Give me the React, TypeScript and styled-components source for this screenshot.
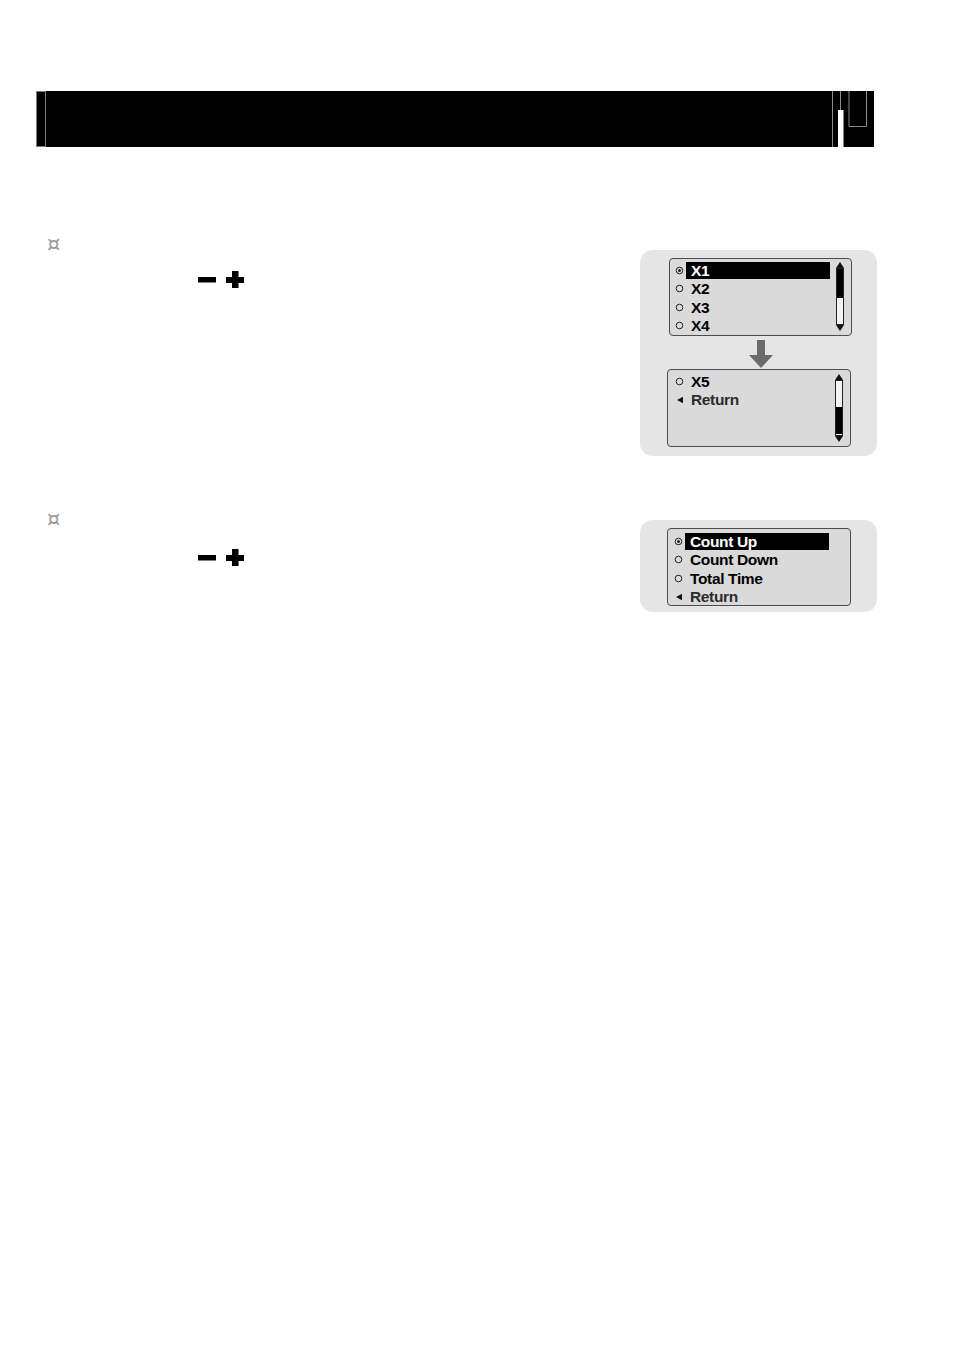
import { FC } from 'react';
import styled, { createGlobalStyle } from 'styled-components';

const GlobalStyle = createGlobalStyle`
  body {
    margin: 0;
    background: #ffffff;
    font-family: 'Liberation Sans', Arial, sans-serif;
  }
`;

const Page = styled.div`
  width: 954px;
  height: 1350px;
  padding-top: 91px;
  box-sizing: border-box;
  background: #ffffff;
`;

const Header = styled.div`
  display: flex;
  margin-left: 36px;
  width: 838px;
  height: 56px;
  background: #000;
`;

const HeaderCap = styled.div`
  width: 10px;
  box-sizing: border-box;
  border: 1px solid #7a7a7a;
`;

const HeaderFill = styled.div`
  flex: 1;
`;

const Section = styled.section<{ top: number }>`
  display: flex;
  align-items: flex-start;
  margin-top: ${(p) => p.top}px;
`;

const Intro = styled.div`
  flex: 1;
  padding-left: 47px;
`;

const Bullet = styled.div`
  font-family: 'DejaVu Sans', sans-serif;
  font-size: 21px;
  line-height: 12px;
  height: 12px;
  color: #9a9a9a;
`;

const Keys = styled.div<{ top: number }>`
  display: flex;
  align-items: center;
  gap: 10px;
  margin-top: ${(p) => p.top}px;
  margin-left: 151px;
`;

const Panel = styled.div<{ top: number; pad: string }>`
  width: 237px;
  margin-top: ${(p) => p.top}px;
  margin-right: 77px;
  padding: ${(p) => p.pad};
  box-sizing: border-box;
  background: #e5e5e5;
  border-radius: 13px;
`;

const Screen = styled.div<{ w: number; h: number; shift?: number }>`
  display: flex;
  width: ${(p) => p.w}px;
  height: ${(p) => p.h}px;
  margin-left: ${(p) => p.shift || 0}px;
  box-sizing: border-box;
  border: 1px solid #4d4d4d;
  border-radius: 4px;
  background: #dadada;
`;

const List = styled.ul<{ pad: string }>`
  flex: 1;
  list-style: none;
  margin: 0;
  padding: ${(p) => p.pad};
`;

const Row = styled.li`
  display: flex;
  align-items: center;
  height: 18.5px;
`;

const Marker = styled.span`
  display: flex;
  align-items: center;
  justify-content: center;
  width: 9px;
  height: 18px;
  margin-right: 2px;
`;

const Label = styled.span<{ active?: boolean; dim?: boolean }>`
  flex: 1;
  height: 17px;
  padding-left: 5px;
  font-size: 15.5px;
  font-weight: 700;
  line-height: 17px;
  letter-spacing: -0.35px;
  white-space: nowrap;
  background: ${(p) => (p.active ? '#000' : 'transparent')};
  color: ${(p) => (p.active ? '#fff' : p.dim ? '#2b2b2b' : '#000')};
`;

const Scroll = styled.div<{ pad: string }>`
  display: flex;
  flex-direction: column;
  align-items: center;
  width: 8px;
  margin: 0 7px 0 6px;
  padding: ${(p) => p.pad};
`;

const Track = styled.div`
  flex: 1;
  display: flex;
  flex-direction: column;
  width: 8px;
  box-sizing: border-box;
  border: 1px solid #222;
  background: #f4f4f4;
`;

const TrackPart = styled.div<{ grow: number; fill?: boolean }>`
  flex: ${(p) => p.grow} 1 0;
  background: ${(p) => (p.fill ? '#000' : 'transparent')};
`;

const DownArrow = styled.div`
  display: flex;
  justify-content: center;
  width: 183px;
  padding: 4px 0 1px;
`;

const Radio: FC<{ on?: boolean }> = ({ on }) => (
  <svg width='9' height='9' viewBox='0 0 9 9'>
    <circle cx='4.5' cy='4.5' r='3.3' fill='none' stroke='#222' strokeWidth='1' />
    {on && <circle cx='4.5' cy='4.5' r='1.5' fill='#222' />}
  </svg>
);

const Back: FC = () => (
  <svg width='8' height='8' viewBox='0 0 8 8'>
    <path d='M1 4 L7 0.8 L7 7.2 Z' fill='#111' />
  </svg>
);

const Tri: FC<{ down?: boolean }> = ({ down }) => (
  <svg width='8' height='6' viewBox='0 0 8 6'>
    <path d={down ? 'M0 0 H8 L4 6 Z' : 'M4 0 L8 6 H0 Z'} fill='#111' />
  </svg>
);

const HeaderTab: FC = () => (
  <svg width='42' height='56' viewBox='0 0 42 56'>
    <g stroke='#8a8a8a' strokeWidth='1' fill='none'>
      <path d='M0.5 0 V56' />
      <path d='M8.5 0 V19' />
      <path d='M17 0 V35.5 H34.5 V0' />
      <path d='M11.5 19 V56' />
    </g>
    <rect x='6' y='19' width='5' height='37' fill='#fff' />
  </svg>
);

const Minus: FC = () => (
  <svg width='18' height='17' viewBox='0 0 18 17'>
    <rect x='0' y='6' width='18' height='5.5' fill='#000' />
  </svg>
);

const Plus: FC = () => (
  <svg width='18' height='17' viewBox='0 0 18 17'>
    <rect x='0' y='6' width='18' height='6' fill='#000' />
    <rect x='6' y='0' width='6.5' height='17' fill='#000' />
  </svg>
);

const DownBig: FC = () => (
  <svg width='24' height='28' viewBox='0 0 24 28'>
    <path d='M8 0 H16 V15 H24 L12 28 L0 15 H8 Z' fill='#6b6b6b' />
  </svg>
);

type Item = { label: string; kind: 'on' | 'off' | 'back'; active?: boolean };

const Rows: FC<{ items: Item[] }> = ({ items }) => (
  <>
    {items.map((it) => (
      <Row key={it.label}>
        <Marker>
          {it.kind === 'back' ? <Back /> : <Radio on={it.kind === 'on'} />}
        </Marker>
        <Label active={it.active} dim={it.kind === 'back'}>
          {it.label}
        </Label>
      </Row>
    ))}
  </>
);

// thumb: [empty before, filled, empty after] as flex weights
const ScrollBar: FC<{ pad: string; parts: [number, number, number] }> = ({
  pad,
  parts,
}) => (
  <Scroll pad={pad}>
    <Tri />
    <Track>
      <TrackPart grow={parts[0]} />
      <TrackPart grow={parts[1]} fill />
      <TrackPart grow={parts[2]} />
    </Track>
    <Tri down />
  </Scroll>
);

const App: FC = () => (
  <Page>
    <GlobalStyle />
    <Header>
      <HeaderCap />
      <HeaderFill />
      <HeaderTab />
    </Header>

    <Section top={91}>
      <Intro>
        <Bullet>¤</Bullet>
        <Keys top={21}>
          <Minus />
          <Plus />
        </Keys>
      </Intro>
      <Panel top={12} pad='8px 0 9px 29px'>
        <Screen w={183} h={78}>
          <List pad='2px 0 0 5px'>
            <Rows
              items={[
                { label: 'X1', kind: 'on', active: true },
                { label: 'X2', kind: 'off' },
                { label: 'X3', kind: 'off' },
                { label: 'X4', kind: 'off' },
              ]}
            />
          </List>
          <ScrollBar pad='3px 0 4px' parts={[0, 30, 26]} />
        </Screen>
        <DownArrow>
          <DownBig />
        </DownArrow>
        <Screen w={184} h={78} shift={-2}>
          <List pad='2px 0 0 7px'>
            <Rows
              items={[
                { label: 'X5', kind: 'off' },
                { label: 'Return', kind: 'back' },
              ]}
            />
          </List>
          <ScrollBar pad='4px 0 4px' parts={[26, 28, 1]} />
        </Screen>
      </Panel>
    </Section>

    <Section top={57}>
      <Intro>
        <Bullet>¤</Bullet>
        <Keys top={24}>
          <Minus />
          <Plus />
        </Keys>
      </Intro>
      <Panel top={7} pad='8px 0 6px 27px'>
        <Screen w={184} h={78}>
          <List pad='3px 21px 0 6px'>
            <Rows
              items={[
                { label: 'Count Up', kind: 'on', active: true },
                { label: 'Count Down', kind: 'off' },
                { label: 'Total Time', kind: 'off' },
                { label: 'Return', kind: 'back' },
              ]}
            />
          </List>
        </Screen>
      </Panel>
    </Section>
  </Page>
);

export default App;
